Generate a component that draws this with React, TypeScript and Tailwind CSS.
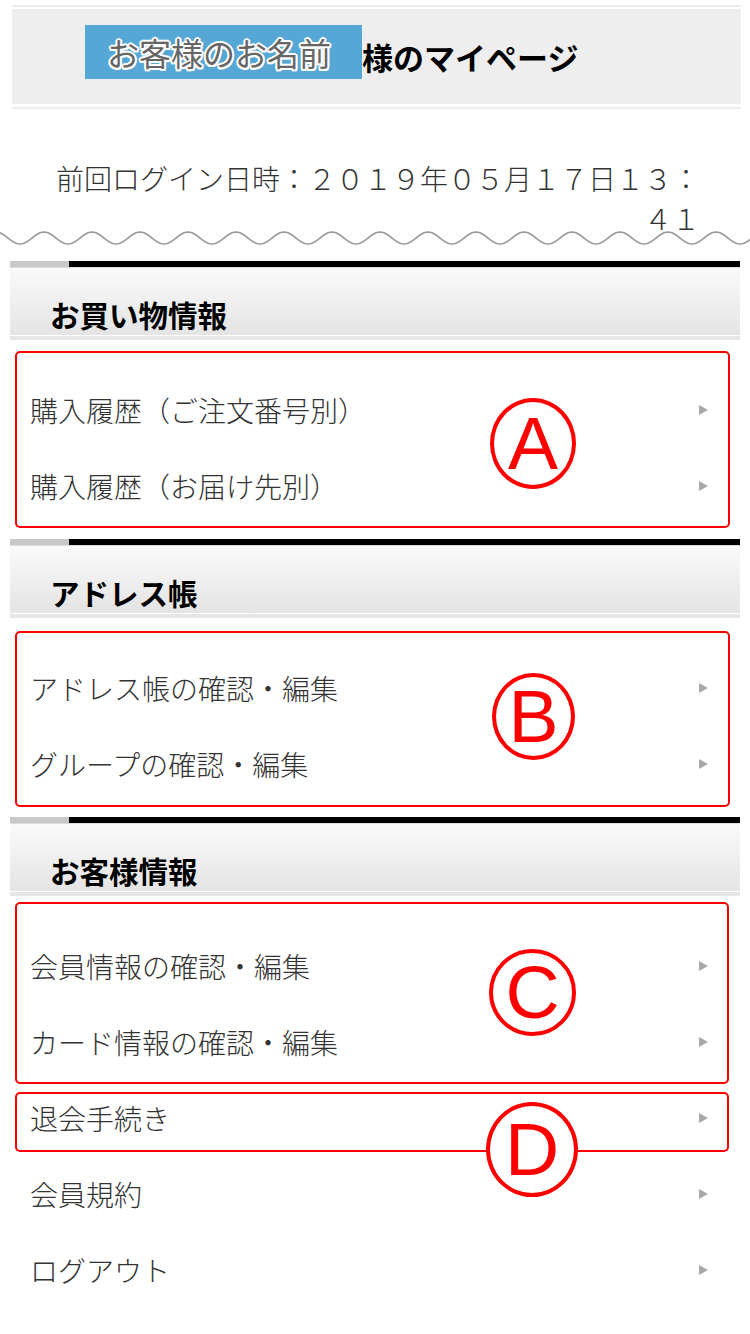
import React from "react";

const wavePath = (() => {
  const w = 752;
  const period = 48;
  const amp = 6;
  const mid = 7;
  let d = "";
  for (let x = 0; x <= w; x += 2) {
    const y = mid + amp * Math.cos(((x - 20) / period) * Math.PI * 2);
    d += (x === 0 ? "M" : "L") + x + " " + y.toFixed(2) + " ";
  }
  return d;
})();

function SectionHeader({ title }: { title: string }) {
  return (
    <div className="mx-[10px]">
      <div className="flex h-[6px]">
        <div className="w-[59px] bg-[#c8c8c8]" />
        <div className="flex-1 bg-black" />
      </div>
      <div className="h-[68px] border-t border-[#dcdcdc] bg-gradient-to-b from-[#fafafa] to-[#e4e4e4] flex items-end pl-[40px] pb-[6px]">
        <span className="text-[29.5px] leading-[30px] font-bold text-black">{title}</span>
      </div>
      <div className="h-[1px] bg-white" />
      <div className="h-[4px] bg-[#e6e6e6]" />
    </div>
  );
}

function Row({ label }: { label: string }) {
  return (
    <div className="h-[76px] flex items-center justify-between pl-[30px] pr-[42px]">
      <span className="text-[28px] leading-none font-light text-[#333]">{label}</span>
      <span className="w-0 h-0 border-y-[5px] border-y-transparent border-l-[9px] border-l-[#a8a8a8]" />
    </div>
  );
}

function Circle({ letter, className }: { letter: string; className: string }) {
  return (
    <div
      className={
        "absolute rounded-[50%] border-4 border-[#f00] bg-white flex items-center justify-center " +
        className
      }
    >
      <span className="font-['Liberation_Sans',sans-serif] text-[75px] leading-none text-[#f00]">{letter}</span>
    </div>
  );
}

export default function App() {
  return (
    <div className="w-[750px] min-h-[1334px] bg-white font-['Noto_Sans_CJK_JP',sans-serif] pt-[5px]">
      {/* top header */}
      <div className="ml-[12px] mr-[9px]">
        <div className="h-[2px] bg-[#ededed]" />
        <div className="mt-[2px] h-[95px] bg-[#eeeeee] pt-[16px] pl-[73px] flex items-start">
          <div className="flex items-center">
            <div className="w-[277px] h-[54px] bg-[#55a8d5] pl-[22px] flex items-center">
              <span className="text-[32px] leading-none text-[#666] [text-shadow:2px_0_0_#fff,-2px_0_0_#fff,0_2px_0_#fff,0_-2px_0_#fff,1.5px_1.5px_0_#fff,-1.5px_-1.5px_0_#fff,1.5px_-1.5px_0_#fff,-1.5px_1.5px_0_#fff]">
                お客様のお名前
              </span>
            </div>
            <span className="mt-[9px] text-[31px] leading-none font-bold text-black">様のマイページ</span>
          </div>
        </div>
        <div className="mt-[3px] h-[2px] bg-[#ededed]" />
      </div>

      {/* last login */}
      <div className="mt-[49px] pl-[50px] pr-[50px] text-right text-[28px] leading-[40px] font-light text-[#333]">
        前回ログイン日時：２０１９年０５月１７日１３：４１
      </div>

      {/* wave */}
      <svg className="block -mt-[7px]" width="750" height="14" viewBox="0 0 750 14">
        <path d={wavePath} fill="none" stroke="#9a9a9a" strokeWidth="1.6" />
      </svg>

      {/* section 1 */}
      <div className="mt-[16px]">
        <SectionHeader title="お買い物情報" />
        <div className="relative pt-[32px] pb-[15px]">
          <Row label="購入履歴（ご注文番号別）" />
          <Row label="購入履歴（お届け先別）" />
          <div className="absolute top-[11px] left-[15px] w-[715px] h-[177px] border-2 border-[#f00] rounded-[5px]" />
          <Circle letter="A" className="top-[58px] left-[490px] w-[86px] h-[91px]" />
        </div>
      </div>

      {/* section 2 */}
      <div>
        <SectionHeader title="アドレス帳" />
        <div className="relative pt-[32px] pb-[15px]">
          <Row label="アドレス帳の確認・編集" />
          <Row label="グループの確認・編集" />
          <div className="absolute top-[13px] left-[15px] w-[715px] h-[176px] border-2 border-[#f00] rounded-[5px]" />
          <Circle letter="B" className="top-[55px] left-[492px] w-[83px] h-[87px]" />
        </div>
      </div>

      {/* section 3 */}
      <div>
        <SectionHeader title="お客様情報" />
        <div className="relative pt-[32px] pb-[20px]">
          <Row label="会員情報の確認・編集" />
          <Row label="カード情報の確認・編集" />
          <Row label="退会手続き" />
          <Row label="会員規約" />
          <Row label="ログアウト" />
          <div className="absolute top-[6px] left-[15px] w-[714px] h-[182px] border-2 border-[#f00] rounded-[5px]" />
          <div className="absolute top-[196px] left-[15px] w-[714px] h-[60px] border-2 border-[#f00] rounded-[5px]" />
          <Circle letter="C" className="top-[53px] left-[489px] w-[87px] h-[87px]" />
          <Circle letter="D" className="top-[206px] left-[486px] w-[92px] h-[95px]" />
        </div>
      </div>
    </div>
  );
}
